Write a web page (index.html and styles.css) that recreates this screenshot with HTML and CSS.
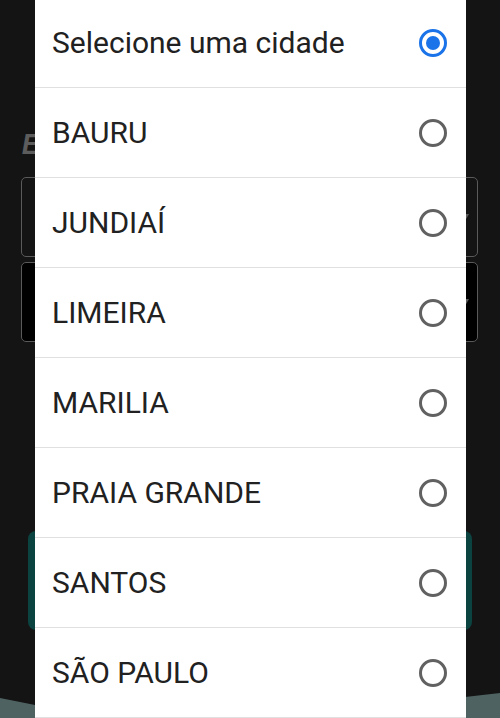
FILE: index.html
```html
<!DOCTYPE html>
<html lang="pt-BR">
<head>
    <meta charset="UTF-8">
    <meta name="viewport" content="width=device-width, initial-scale=1.0">
    <title>Selecione uma cidade</title>
    <link rel="stylesheet" href="styles.css">
</head>
<body>
    <div class="screen">
        <h2 class="title">E</h2>
        <div class="field"><span class="arrow"></span></div>
        <div class="field field-dark"><span class="arrow"></span></div>
        <button class="submit"></button>
        <div class="ground"></div>
    </div>

    <div class="dialog">
        <ul class="options">
            <li class="option"><span>Selecione uma cidade</span><span class="radio checked"></span></li>
            <li class="option"><span>BAURU</span><span class="radio"></span></li>
            <li class="option"><span>JUNDIAÍ</span><span class="radio"></span></li>
            <li class="option"><span>LIMEIRA</span><span class="radio"></span></li>
            <li class="option"><span>MARILIA</span><span class="radio"></span></li>
            <li class="option"><span>PRAIA GRANDE</span><span class="radio"></span></li>
            <li class="option"><span>SANTOS</span><span class="radio"></span></li>
            <li class="option"><span>SÃO PAULO</span><span class="radio"></span></li>
        </ul>
    </div>
</body>
</html>
```

FILE: styles.css
```css
html, body {
    margin: 0;
    height: 100%;
    overflow: hidden;
}

body {
    font-family: Roboto, "Liberation Sans", sans-serif;
    background-color: #141414;
    color: #212121;
}

/* page behind the dialog */
.screen {
    padding: 0 22px 0 21px;
}

.title {
    margin: 129px 0 0 1px;
    font-size: 28px;
    line-height: 32px;
    font-style: italic;
    font-weight: bold;
    color: #5c5c5c;
}

.field {
    box-sizing: border-box;
    height: 80px;
    margin-top: 16px;
    border: 1px solid #5a5a5a;
    border-radius: 5px;
    display: flex;
    align-items: center;
    justify-content: flex-end;
    padding-right: 8px;
}

.field-dark {
    margin-top: 5px;
    background-color: #000000;
}

.arrow {
    width: 0;
    height: 0;
    border-left: 4px solid transparent;
    border-right: 4px solid transparent;
    border-top: 7px solid #5a5a5a;
}

.submit {
    display: block;
    width: 444px;
    height: 99px;
    margin: 189px 0 0 7px;
    border: none;
    border-radius: 8px;
    background-color: #0b4341;
}

.ground {
    height: 28px;
    margin: 60px -22px 0 -21px;
    background-color: #4e6261;
    clip-path: polygon(0 8px, 7% 15px, 93% 7px, 100% 3px, 100% 100%, 0 100%);
}

/* city picker */
.dialog {
    position: absolute;
    left: 35px;
    top: -2px;
    width: 431px;
    bottom: 0;
    background-color: #ffffff;
    overflow: hidden;
}

.options {
    list-style: none;
    margin: 0;
    padding: 0;
}

.option {
    box-sizing: border-box;
    height: 90px;
    padding: 0 19px 0 17px;
    border-bottom: 1px solid #e0e0e0;
    display: flex;
    align-items: center;
    justify-content: space-between;
    font-size: 30px;
}

.radio {
    box-sizing: border-box;
    width: 28px;
    height: 28px;
    border: 3px solid #616161;
    border-radius: 50%;
    display: flex;
    align-items: center;
    justify-content: center;
}

.radio.checked {
    border-color: #1a73e8;
}

.radio.checked::after {
    content: "";
    width: 14px;
    height: 14px;
    border-radius: 50%;
    background-color: #1a73e8;
}
```
